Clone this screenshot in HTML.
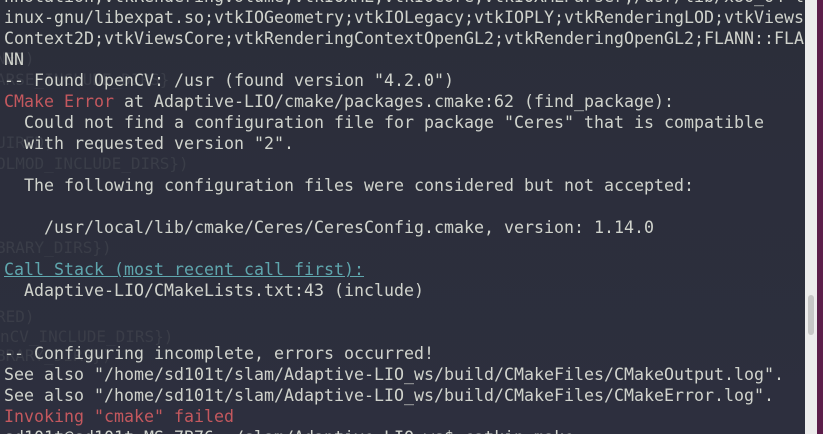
<!DOCTYPE html>
<html><head><style>
html,body{margin:0;padding:0;width:823px;height:434px;overflow:hidden;background:#2c2f3c}
.t{position:absolute;left:0;top:0;width:805px;height:434px;background:linear-gradient(#2b2e3a,#2d2f3e);overflow:hidden}
pre{position:absolute;left:4px;top:-14px;margin:0;font-family:"DejaVu Sans Mono","Liberation Mono",monospace;font-size:16.63px;line-height:21px;color:#d0d3cc;white-space:pre}
.r{color:#c4585e}.c{color:#5fa6ad;text-decoration:underline}
.f{position:absolute;font-family:"DejaVu Sans Mono",monospace;font-size:16px;color:#3a3d48;white-space:pre}
.sb{position:absolute;left:805px;top:0;width:12px;height:434px;background:#ececec}
.th{position:absolute;left:808px;top:295px;width:6px;height:40px;background:#c6c6c6;border-radius:3px}
.p{position:absolute;left:817px;top:0;width:6px;height:434px;background:#5c1e4a}
</style></head><body>
<div class="t">
<div class="f" style="left:-4px;top:49px">NED)</div>
<div class="f" style="left:-4px;top:70px">ARSE_INCLUDE_DIRS}</div>
<div class="f" style="left:-4px;top:133px">UIRED)</div>
<div class="f" style="left:-4px;top:154px">OLMOD_INCLUDE_DIRS})</div>
<div class="f" style="left:-4px;top:238px">BRARY_DIRS})</div>
<div class="f" style="left:-4px;top:307px">RED)</div>
<div class="f" style="left:0px;top:327px">nCV_INCLUDE_DIRS})</div>
<div class="f" style="left:-4px;top:346px">BRARY_DIRS})</div>
<pre>nnotation;vtkRenderingVolume;vtkIOXML;vtkIOCore;vtkIOXMLParser;/usr/lib/x86_64-l
inux-gnu/libexpat.so;vtkIOGeometry;vtkIOLegacy;vtkIOPLY;vtkRenderingLOD;vtkViews
Context2D;vtkViewsCore;vtkRenderingContextOpenGL2;vtkRenderingOpenGL2;FLANN::FLA
NN
-- Found OpenCV: /usr (found version "4.2.0")
<span class="r">CMake Error</span> at Adaptive-LIO/cmake/packages.cmake:62 (find_package):
  Could not find a configuration file for package "Ceres" that is compatible
  with requested version "2".

  The following configuration files were considered but not accepted:

    /usr/local/lib/cmake/Ceres/CeresConfig.cmake, version: 1.14.0

<span class="c">Call Stack (most recent call first):</span>
  Adaptive-LIO/CMakeLists.txt:43 (include)


-- Configuring incomplete, errors occurred!
See also "/home/sd101t/slam/Adaptive-LIO_ws/build/CMakeFiles/CMakeOutput.log".
See also "/home/sd101t/slam/Adaptive-LIO_ws/build/CMakeFiles/CMakeError.log".
<span class="r">Invoking "cmake" failed</span>
sd101t@sd101t-MS-7B76:~/slam/Adaptive-LIO_ws$ catkin_make</pre>
</div>
<div class="sb"></div><div class="th"></div><div class="p"></div>
</body></html>
